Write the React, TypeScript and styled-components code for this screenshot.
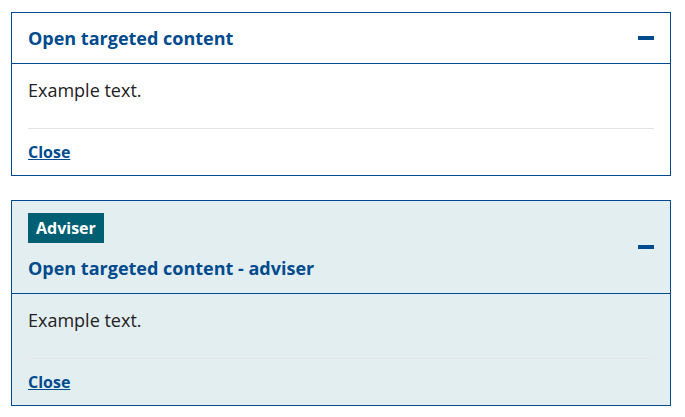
import { createGlobalStyle, styled } from "styled-components";

const COLORS = {
  PRIMARY: "#004b8d",
  TEAL: "#005f73",
  TEXT: "#222222",
  TINT: "#e3eef1",
  RULE: "#e3e3e3",
  RULE_TINTED: "#e8e6ea",
};

const GlobalStyle = createGlobalStyle`
  body {
    margin: 0;
    background: #ffffff;
    font-family: "Open Sans", "Liberation Sans", sans-serif;
    color: ${COLORS.TEXT};
  }
`;

const Page = styled.main`
  padding: 12px 14px 12px 11px;
  display: flex;
  flex-direction: column;
  gap: 24px;
`;

const Panel = styled.section<{ $tinted?: boolean }>`
  border: 1px solid ${COLORS.PRIMARY};
  background: ${({ $tinted }) => ($tinted ? COLORS.TINT : "#ffffff")};
`;

const Header = styled.div`
  display: flex;
  align-items: center;
  gap: 16px;
  padding: 12px 16px;
  border-bottom: 1px solid ${COLORS.PRIMARY};
`;

const HeaderText = styled.div`
  flex: 1;
  display: flex;
  flex-direction: column;
  align-items: flex-start;
  gap: 12px;
`;

const Badge = styled.span`
  display: inline-block;
  background: ${COLORS.TEAL};
  color: #ffffff;
  font-size: 16px;
  font-weight: 700;
  line-height: 24px;
  padding: 3px 8px;
`;

const Title = styled.h2`
  margin: 0;
  font-size: 18px;
  font-weight: 700;
  line-height: 26px;
  color: ${COLORS.PRIMARY};
`;

const Minus = styled.span`
  display: block;
  width: 16px;
  height: 4px;
  background: ${COLORS.PRIMARY};
`;

const Body = styled.div`
  padding: 12px 16px;
`;

const Text = styled.p`
  margin: 0 0 24px;
  font-size: 18px;
  line-height: 28px;
`;

const Footer = styled.div<{ $tinted?: boolean }>`
  border-top: 1px solid ${({ $tinted }) => ($tinted ? COLORS.RULE_TINTED : COLORS.RULE)};
  padding-top: 12px;
  line-height: 22px;
`;

const CloseLink = styled.a`
  font-size: 16px;
  font-weight: 700;
  line-height: 22px;
  color: ${COLORS.PRIMARY};
  text-decoration: underline;
  cursor: pointer;
`;

type PanelProps = {
  title: string;
  badge?: string;
  tinted?: boolean;
};

const TargetedPanel = ({ title, badge, tinted }: PanelProps) => (
  <Panel $tinted={tinted}>
    <Header>
      <HeaderText>
        {badge && <Badge>{badge}</Badge>}
        <Title>{title}</Title>
      </HeaderText>
      <Minus />
    </Header>
    <Body>
      <Text>Example text.</Text>
      <Footer $tinted={tinted}>
        <CloseLink href="#">Close</CloseLink>
      </Footer>
    </Body>
  </Panel>
);

const App = () => (
  <>
    <GlobalStyle />
    <Page>
      <TargetedPanel title="Open targeted content" />
      <TargetedPanel title="Open targeted content - adviser" badge="Adviser" tinted />
    </Page>
  </>
);

export default App;
